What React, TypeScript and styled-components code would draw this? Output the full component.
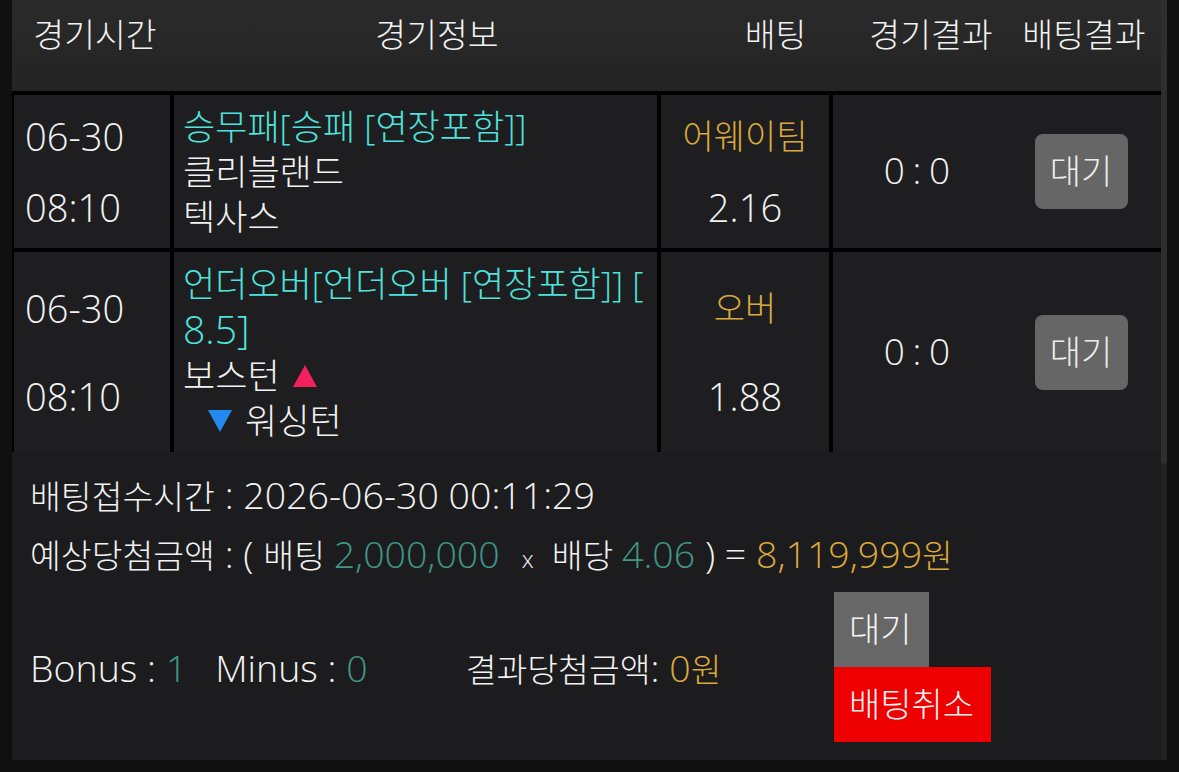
import React from "react";
import styled, { createGlobalStyle } from "styled-components";

const GlobalStyle = createGlobalStyle`
  html, body {
    margin: 0;
    padding: 0;
    background: #101010;
  }
  body {
    font-family: "Open Sans", "Noto Sans CJK KR", sans-serif;
    font-weight: 300;
    color: #f2f2f2;
  }
`;

const Page = styled.div`
  padding-left: 12px;
  height: 772px;
  overflow: hidden;
`;

const Panel = styled.div`
  display: flex;
  width: 1155px;
  height: 760px;
`;

const Content = styled.div`
  flex: 1;
  display: flex;
  flex-direction: column;
  overflow: hidden;
  background: #1c1c1e;

  & > * {
    flex-shrink: 0;
  }
`;

const ScrollTrack = styled.div`
  width: 6px;
  background: #212122;
  display: flex;
  flex-direction: column;
`;

const ScrollThumb = styled.div`
  height: 464px;
  background: #2e2e2f;
  border-radius: 0 0 3px 3px;
`;

const Header = styled.div`
  display: grid;
  grid-template-columns: 166px 518px 159px 152px 1fr;
  height: 91px;
  background: linear-gradient(#2a2a2a, #242424);
`;

const HeadCell = styled.div`
  text-align: center;
  font-size: 33.5px;
  line-height: 68px;
  white-space: nowrap;
`;

const Table = styled.div`
  display: grid;
  row-gap: 4px;
  padding: 4px 0 0 2px;
  background: #000;
`;

const Row = styled.div`
  display: grid;
  grid-template-columns: 156px 483px 168px 1fr;
  column-gap: 4px;
`;

const Cell = styled.div`
  background: #1e1e20;
`;

/* latin glyphs in the original font run larger than the hangul */
const Latin = styled.span`
  font-size: 1.12em;
`;

const StackCell = styled(Cell)<{ $center?: boolean }>`
  display: flex;
  flex-direction: column;
  justify-content: space-evenly;
  align-items: ${(p) => (p.$center ? "center" : "flex-start")};
  padding-left: ${(p) => (p.$center ? "0" : "11px")};
  font-size: 34px;
  line-height: 62px;
  white-space: nowrap;
`;

const InfoCell = styled(Cell)`
  padding: 9px 9px;
  font-size: 35px;
  line-height: 45px;
`;

const Line = styled.div<{ $indent?: boolean }>`
  white-space: nowrap;
  display: flex;
  align-items: center;
  gap: 12px;
  padding-left: ${(p) => (p.$indent ? "24px" : "0")};
`;

const Market = styled.div`
  color: #4de2dc;
  white-space: nowrap;
`;

const Gold = styled.span`
  color: #dba93a;
`;

const Teal = styled.span`
  color: #3f9686;
`;

const ResultCell = styled(Cell)`
  display: grid;
  grid-template-columns: 168px 1fr;
  align-items: center;
`;

const Score = styled.div`
  text-align: center;
  font-size: 37px;
  word-spacing: -2px;
  margin-bottom: 4px;
`;

const StatusBox = styled.div`
  justify-self: center;
  width: 93px;
  height: 75px;
  border-radius: 8px;
  background: #666666;
  color: #eeeeee;
  font-size: 34px;
  line-height: 75px;
  text-align: center;
`;

const Footer = styled.div`
  padding: 14px 18px 0;
`;

const InfoLine = styled.div`
  font-size: 33.5px;
  line-height: 58px;
  white-space: nowrap;
`;

const Times = styled.span`
  font-size: 24px;
  margin: 0 18px 0 22px;
`;

const BottomRow = styled.div`
  display: grid;
  grid-template-columns: 804px auto;
  align-items: center;
  margin-top: 4px;
`;

const Totals = styled.div`
  display: flex;
  align-items: baseline;
  font-size: 33.5px;
  white-space: nowrap;
`;

const Total = styled.span<{ $gap: number }>`
  margin-left: ${(p) => p.$gap}px;
`;

const ButtonStack = styled.div`
  display: flex;
  flex-direction: column;
  align-items: flex-start;
`;

const ActionButton = styled.div<{ $danger?: boolean }>`
  height: 75px;
  line-height: 75px;
  padding: 0 17px 0 15px;
  font-size: 34px;
  color: #f4f4f4;
  background: ${(p) => (p.$danger ? "#ee0000" : "#676767")};
`;

const Arrow = ({ up }: { up?: boolean }) => (
  <svg width="26" height="24" viewBox="0 0 26 24">
    <path
      d={up ? "M13 1 L25 23 L1 23 Z" : "M1 1 L25 1 L13 23 Z"}
      fill={up ? "#f2205c" : "#2389f0"}
    />
  </svg>
);

export default function App() {
  return (
    <Page>
      <GlobalStyle />
      <Panel>
        <Content>
          <Header>
            <HeadCell>경기시간</HeadCell>
            <HeadCell>경기정보</HeadCell>
            <HeadCell>배팅</HeadCell>
            <HeadCell>경기결과</HeadCell>
            <HeadCell>배팅결과</HeadCell>
          </Header>
          <Table>
            <Row>
              <StackCell>
                <Latin>06-30</Latin>
                <Latin>08:10</Latin>
              </StackCell>
              <InfoCell>
                <Market>승무패[승패 [연장포함]]</Market>
                <Line>클리블랜드</Line>
                <Line>텍사스</Line>
              </InfoCell>
              <StackCell $center>
                <Gold>어웨이팀</Gold>
                <Latin>2.16</Latin>
              </StackCell>
              <ResultCell>
                <Score>0 : 0</Score>
                <StatusBox>대기</StatusBox>
              </ResultCell>
            </Row>
            <Row>
              <StackCell>
                <Latin>06-30</Latin>
                <Latin>08:10</Latin>
              </StackCell>
              <InfoCell>
                <Market>
                  언더오버[언더오버 [연장포함]] [
                  <br />
                  <Latin>8.5]</Latin>
                </Market>
                <Line>
                  보스턴 <Arrow up />
                </Line>
                <Line $indent>
                  <Arrow /> 워싱턴
                </Line>
              </InfoCell>
              <StackCell $center>
                <Gold>오버</Gold>
                <Latin>1.88</Latin>
              </StackCell>
              <ResultCell>
                <Score>0 : 0</Score>
                <StatusBox>대기</StatusBox>
              </ResultCell>
            </Row>
          </Table>
          <Footer>
            <InfoLine>
              배팅접수시간<Latin> : 2026-06-30 00:11:29</Latin>
            </InfoLine>
            <InfoLine>
              예상당첨금액<Latin> : ( </Latin>배팅{" "}
              <Teal>
                <Latin>2,000,000</Latin>
              </Teal>
              <Times>x</Times>배당{" "}
              <Teal>
                <Latin>4.06</Latin>
              </Teal>
              <Latin> ) = </Latin>
              <Gold>
                <Latin>8,119,999</Latin>원
              </Gold>
            </InfoLine>
            <BottomRow>
              <Totals>
                <Latin>
                  Bonus : <Teal>1</Teal>
                </Latin>
                <Total $gap={28}>
                  <Latin>
                    Minus : <Teal>0</Teal>
                  </Latin>
                </Total>
                <Total $gap={98}>
                  결과당첨금액<Latin>: </Latin>
                  <Gold>
                    <Latin>0</Latin>원
                  </Gold>
                </Total>
              </Totals>
              <ButtonStack>
                <ActionButton>대기</ActionButton>
                <ActionButton $danger>배팅취소</ActionButton>
              </ButtonStack>
            </BottomRow>
          </Footer>
        </Content>
        <ScrollTrack>
          <ScrollThumb />
        </ScrollTrack>
      </Panel>
    </Page>
  );
}
